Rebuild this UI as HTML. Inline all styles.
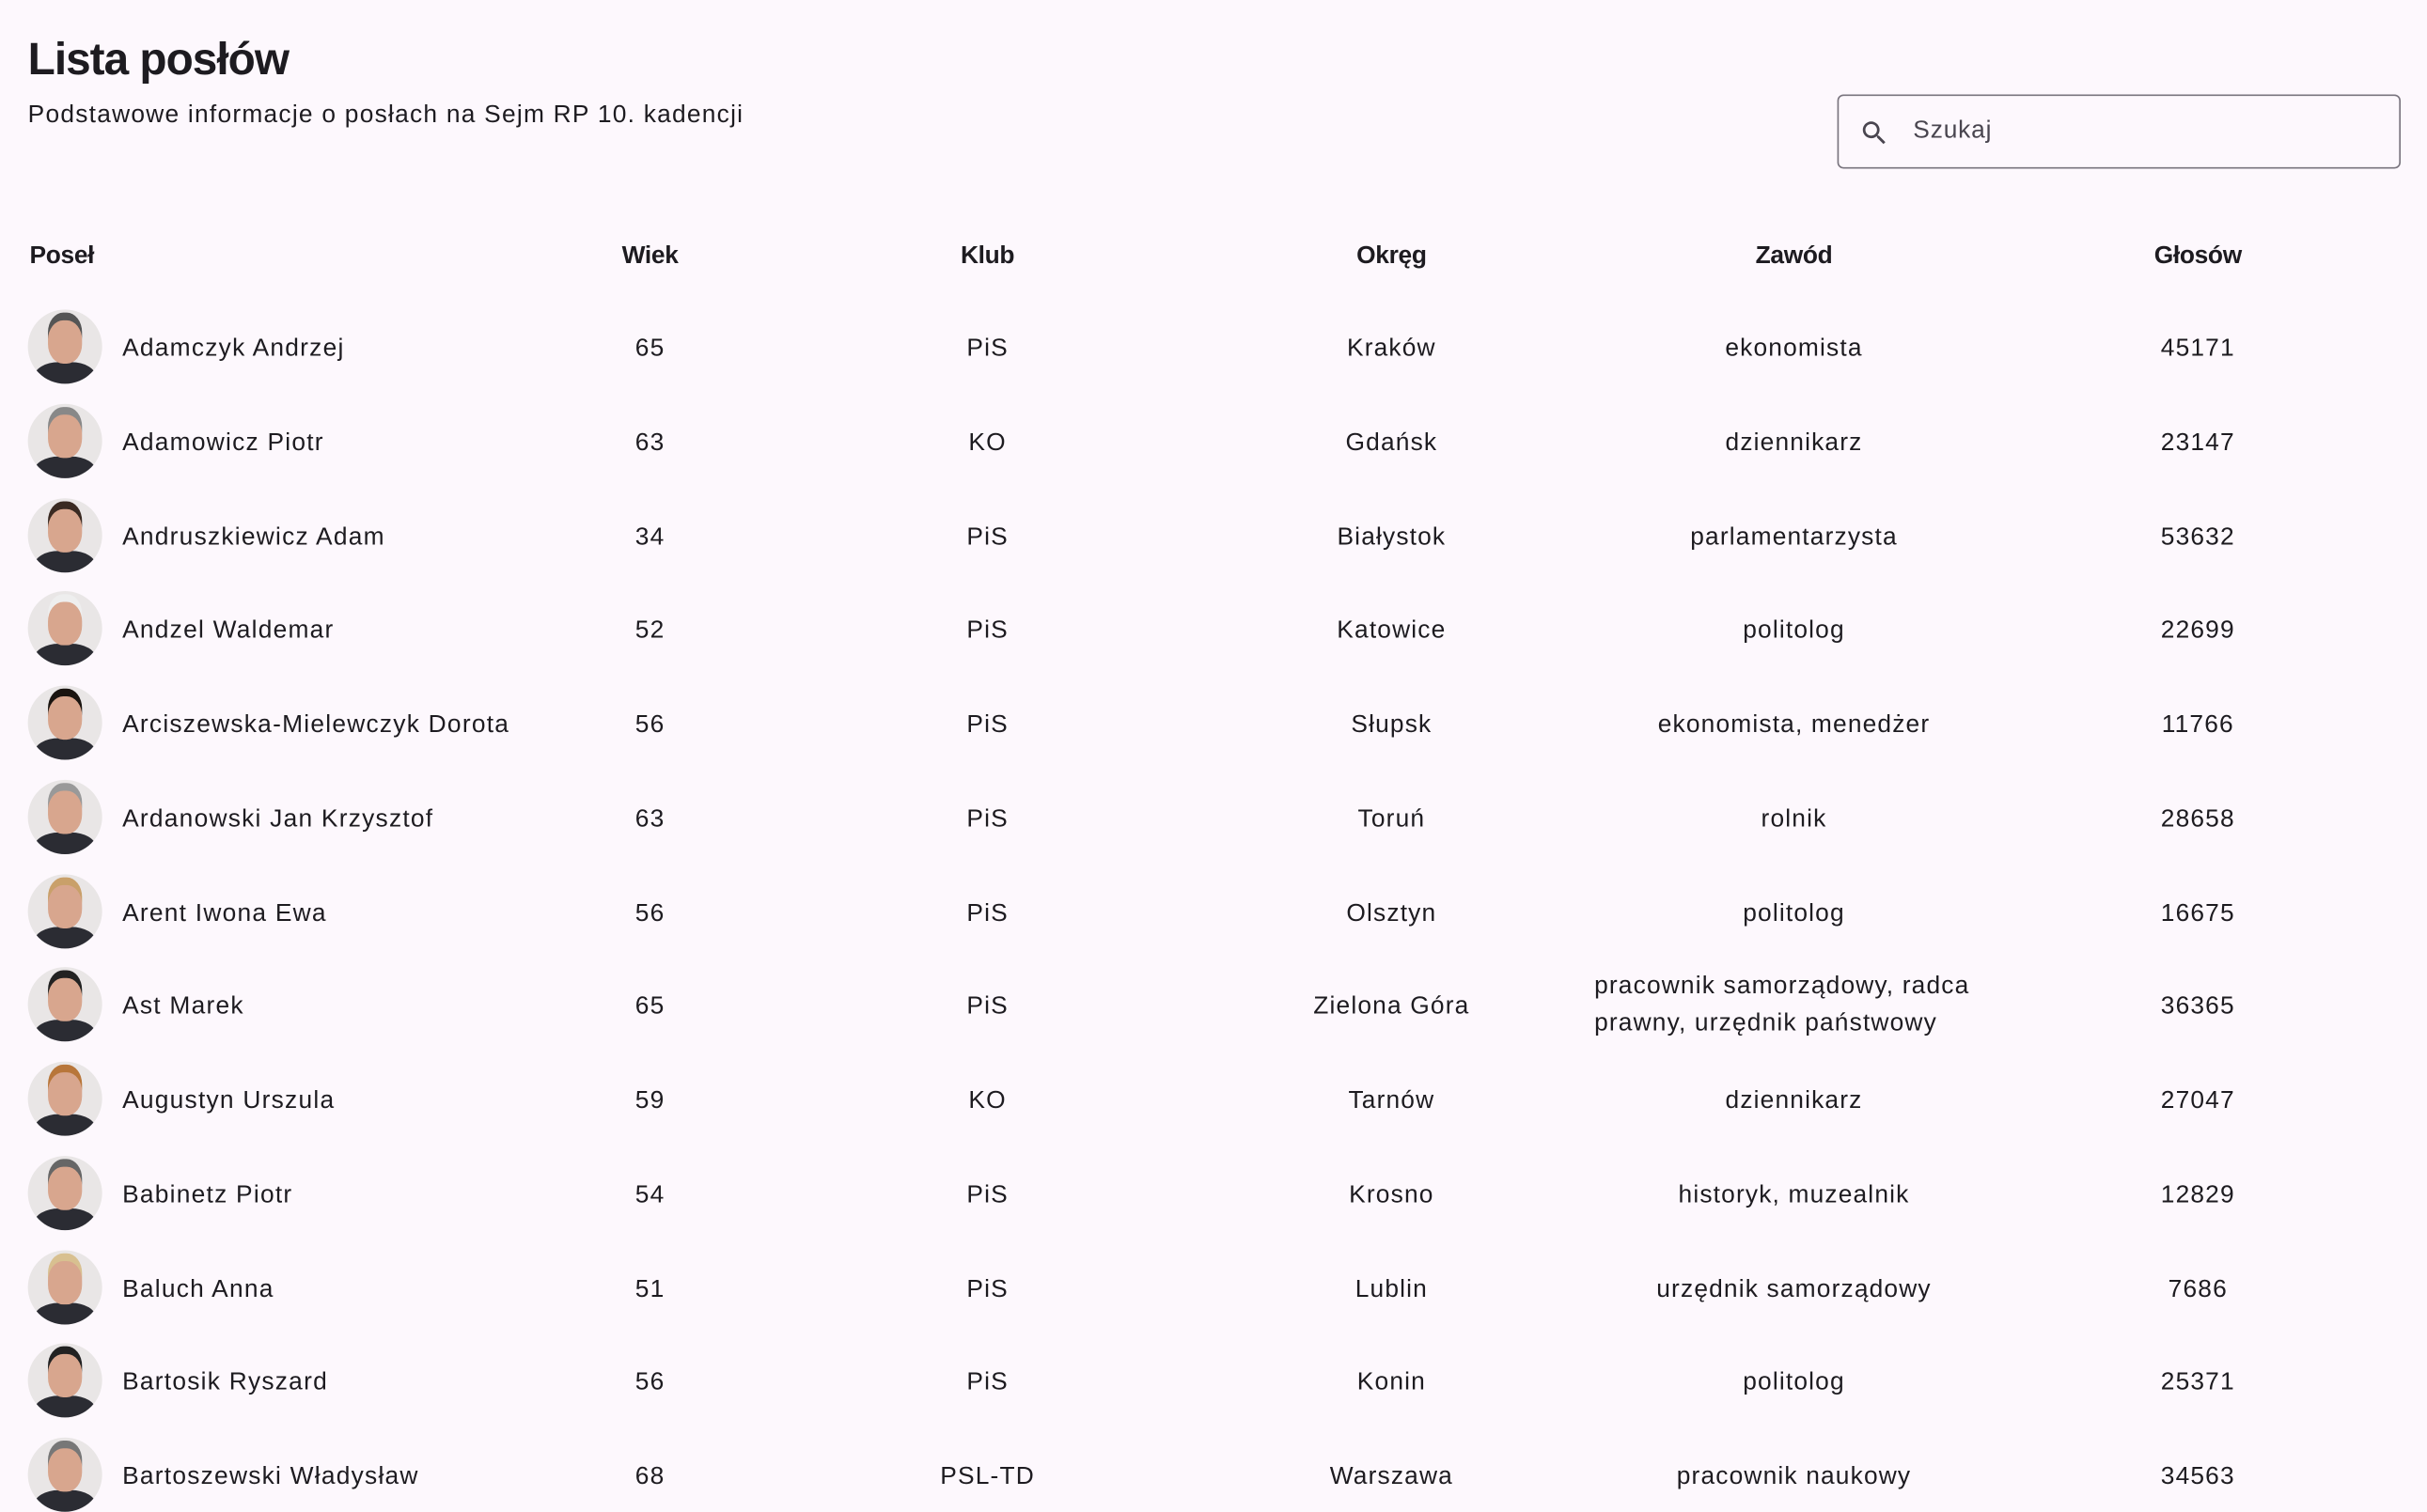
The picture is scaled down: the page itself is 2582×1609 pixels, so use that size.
<!DOCTYPE html>
<html><head><meta charset="utf-8"><style>
html,body{margin:0;padding:0;background:#fdf8fd;overflow:hidden;width:2582px;height:1594px}
#w{position:absolute;left:0;top:0;width:1568px;height:968px;transform:scale(1.64668);transform-origin:0 0;font-family:"Liberation Sans",sans-serif;color:#1d1b20}
h1{position:absolute;left:18px;top:20px;margin:0;font-size:29px;font-weight:600;letter-spacing:-0.6px;line-height:38px}
.sub{position:absolute;left:18px;top:64px;font-size:16px;line-height:22px;letter-spacing:0.75px}
.search{position:absolute;left:1187px;top:61px;width:364px;height:48px;border:1px solid #79747e;border-radius:4px;box-sizing:border-box}
.search svg{position:absolute;left:13px;top:14px}
.search span{position:absolute;left:48px;top:14px;font-size:16px;color:#49454f;letter-spacing:0.5px}
.c{position:absolute;transform:translate(-50%,-50%);white-space:nowrap;font-size:16px;letter-spacing:0.7px}
.h{font-weight:700;letter-spacing:-0.2px}
.av{position:absolute;left:18px;width:48px;height:48px;border-radius:50%;overflow:hidden;background:#e9e6e6}
.av i{position:absolute;left:13px;top:7px;width:22px;height:28px;border-radius:45%;background:#d8a68e}
.av b{position:absolute;left:4px;top:34px;width:40px;height:24px;border-radius:40% 40% 0 0;background:#2b2c33}
.nm{position:absolute;left:79px;transform:translateY(-50%);font-size:16px;letter-spacing:0.75px;white-space:nowrap}
</style></head><body><div id="w">
<h1>Lista posłów</h1>
<div class="sub">Podstawowe informacje o posłach na Sejm RP 10. kadencji</div>
<div class="search"><svg width="20" height="20" viewBox="0 0 24 24"><path fill="#49454f" d="M15.5 14h-.79l-.28-.27A6.47 6.47 0 0 0 16 9.5 6.5 6.5 0 1 0 9.5 16c1.610 0 3.090-.59 4.230-1.57l.27.28v.79l5 4.99L20.49 19l-4.99-5zm-6 0C7.01 14 5 11.99 5 9.5S7.01 5 9.5 5 14 7.01 14 9.5 11.99 14 9.5 14z"/></svg><span>Szukaj</span></div>
<div class="c h" style="left:40px;top:166px">Poseł</div>
<div class="c h" style="left:420px;top:166px">Wiek</div>
<div class="c h" style="left:638px;top:166px">Klub</div>
<div class="c h" style="left:899px;top:166px">Okręg</div>
<div class="c h" style="left:1159px;top:166px">Zawód</div>
<div class="c h" style="left:1420px;top:166px">Głosów</div>
<div id="rows"></div>
</div>
<script>
var d=[["Adamczyk Andrzej","65","PiS","Kraków","ekonomista","45171"],
["Adamowicz Piotr","63","KO","Gdańsk","dziennikarz","23147"],
["Andruszkiewicz Adam","34","PiS","Białystok","parlamentarzysta","53632"],
["Andzel Waldemar","52","PiS","Katowice","politolog","22699"],
["Arciszewska-Mielewczyk Dorota","56","PiS","Słupsk","ekonomista, menedżer","11766"],
["Ardanowski Jan Krzysztof","63","PiS","Toruń","rolnik","28658"],
["Arent Iwona Ewa","56","PiS","Olsztyn","politolog","16675"],
["Ast Marek","65","PiS","Zielona Góra","","36365"],
["Augustyn Urszula","59","KO","Tarnów","dziennikarz","27047"],
["Babinetz Piotr","54","PiS","Krosno","historyk, muzealnik","12829"],
["Baluch Anna","51","PiS","Lublin","urzędnik samorządowy","7686"],
["Bartosik Ryszard","56","PiS","Konin","politolog","25371"],
["Bartoszewski Władysław","68","PSL-TD","Warszawa","pracownik naukowy","34563"]];
var hair=["#555","#888","#3a2a22","#eee","#1a1410","#999","#c9a06a","#222","#b8763a","#666","#d8c090","#222","#777"];
var h="";var xs=[420,638,899,1159,1420];
d.forEach(function(r,i){var y=226+60.75*i;
h+='<div class="av" style="top:'+(y-26)+'px"><b></b><i style="box-shadow:0 -5px 0 '+hair[i]+'"></i></div>';
h+='<div class="nm" style="top:'+y+'px">'+r[0]+'</div>';
for(var k=1;k<6;k++){if(r[k]==="")continue;h+='<div class="c" style="left:'+xs[k-1]+'px;top:'+y+'px">'+r[k]+'</div>';}
if(i==7)h+='<div style="position:absolute;left:1030px;top:'+(y-25)+'px;font-size:16px;line-height:24px;letter-spacing:0.7px;white-space:nowrap">pracownik samorządowy, radca<br>prawny, urzędnik państwowy</div>';
});
document.getElementById("rows").innerHTML=h;
</script>
</body></html>
